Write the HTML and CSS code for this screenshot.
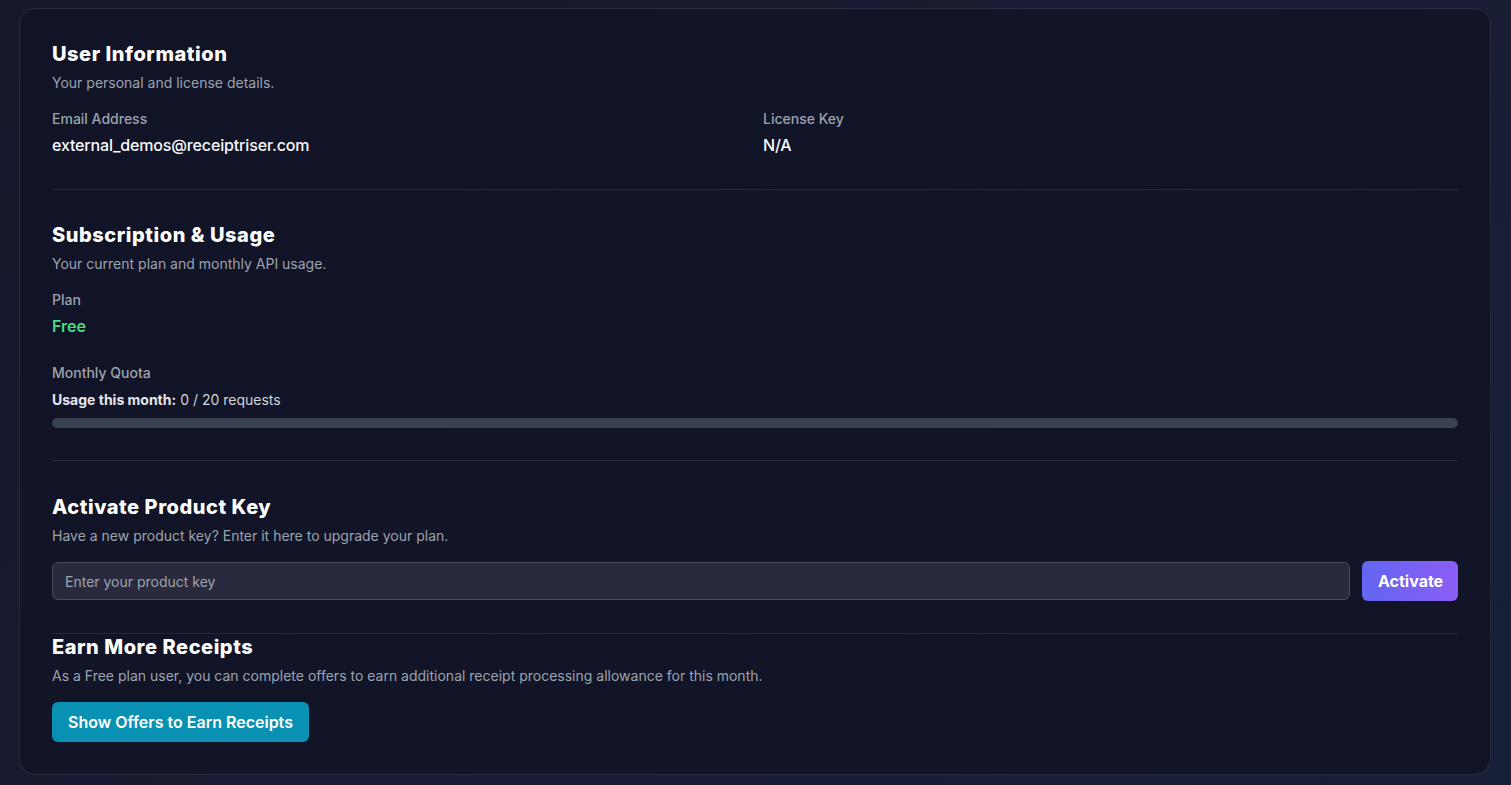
FILE: index.html
```html
<!DOCTYPE html>
<html lang="en">
<head>
<meta charset="utf-8">
<title>Account</title>
<link rel="stylesheet" href="styles.css">
</head>
<body>
<main class="card">
  <section class="section">
    <h2 class="title">User Information</h2>
    <p class="desc">Your personal and license details.</p>
    <div class="grid">
      <div class="field">
        <div class="label">Email Address</div>
        <div class="value">external_demos@receiptriser.com</div>
      </div>
      <div class="field">
        <div class="label">License Key</div>
        <div class="value">N/A</div>
      </div>
    </div>
  </section>
  <section class="section">
    <h2 class="title">Subscription &amp; Usage</h2>
    <p class="desc">Your current plan and monthly API usage.</p>
    <div class="field">
      <div class="label">Plan</div>
      <div class="value plan">Free</div>
    </div>
    <div class="quota">
      <div class="label">Monthly Quota</div>
      <div class="usage"><strong>Usage this month:</strong> 0 / 20 requests</div>
      <div class="bar"><div class="bar-fill" style="width:0%"></div></div>
    </div>
  </section>
  <section class="section key-section">
    <h2 class="title">Activate Product Key</h2>
    <p class="desc">Have a new product key? Enter it here to upgrade your plan.</p>
    <div class="key-row">
      <input class="key-input" type="text" placeholder="Enter your product key">
      <button class="btn btn-activate" type="button">Activate</button>
    </div>
  </section>
  <section class="section last">
    <h2 class="title">Earn More Receipts</h2>
    <p class="desc">As a Free plan user, you can complete offers to earn additional receipt processing allowance for this month.</p>
    <button class="btn btn-offers" type="button">Show Offers to Earn Receipts</button>
  </section>
</main>
</body>
</html>
```
FILE: styles.css
```css
* { box-sizing: border-box; }
html, body { height: 100%; }
body {
  margin: 0;
  padding: 8px 20px 0 19px;
  background: linear-gradient(135deg, #15182b 0%, #1a1d33 50%, #172039 100%);
  font-family: Inter, "Noto Sans", sans-serif;
  color: #fff;
  overflow: hidden;
}
.card {
  background: linear-gradient(135deg, #111326 0%, #121427 50%, #111326 100%);
  border: 1px solid #2a2c3e;
  border-radius: 16px;
  padding: 31px 32px 32px 32px;
}
.section {
  padding-bottom: 32px;
  border-bottom: 1px solid #25283a;
}
.section + .section { padding-top: 31px; }
.section.key-section { padding-top: 32px; }
.section.last { border-bottom: none; padding-bottom: 0; padding-top: 0; }
.section.last .title { margin-top: -1px; }
.title {
  margin: 0;
  font-size: 20px;
  line-height: 28px;
  font-weight: 800;
  letter-spacing: 0.55px;
  color: #fff;
}
.desc {
  margin: 5px 0 0;
  font-size: 14px;
  line-height: 20px;
  color: #9ca3af;
}
.grid {
  display: grid;
  grid-template-columns: 1fr 1fr;
  gap: 16px;
  margin-top: 16px;
}
.section > .field { margin-top: 16px; }
.label {
  font-size: 14px;
  line-height: 20px;
  color: #9ca3af;
  font-weight: 500;
}
.value {
  margin-top: 4px;
  font-size: 16px;
  line-height: 24px;
  font-weight: 500;
  letter-spacing: -0.15px;
  color: #f9fafb;
}
.value.plan { color: #4ade80; font-weight: 600; letter-spacing: 0; }
.quota { margin-top: 25px; }
.usage {
  margin-top: 7px;
  font-size: 14px;
  line-height: 20px;
  color: #d1d5db;
}
.usage strong { font-weight: 700; color: #e5e7eb; }
.bar {
  margin-top: 8px;
  height: 10px;
  border-radius: 999px;
  background: #374151;
  overflow: hidden;
}
.bar-fill { height: 100%; background: #6366f1; }
.key-row {
  display: flex;
  align-items: center;
  gap: 12px;
  margin-top: 15px;
}
.key-input {
  flex: 1;
  height: 38px;
  padding: 0 12px;
  background: #292a3d;
  border: 1px solid #4a4c5e;
  border-radius: 6px;
  color: #fff;
  font-family: Inter, "Noto Sans", sans-serif;
  font-size: 14px;
  outline: none;
}
.key-input::placeholder { color: #9ca3af; }
.btn {
  height: 40px;
  border: none;
  border-radius: 6px;
  padding: 0 16px;
  font-family: Inter, "Noto Sans", sans-serif;
  font-size: 16px;
  font-weight: 700;
  color: #fff;
  cursor: pointer;
}
.btn-activate {
  width: 96px;
  background: linear-gradient(90deg, #6366f1, #8b5cf6);
}
.btn-offers {
  margin-top: 16px;
  background: #0891b2;
  font-weight: 600;
}
```
